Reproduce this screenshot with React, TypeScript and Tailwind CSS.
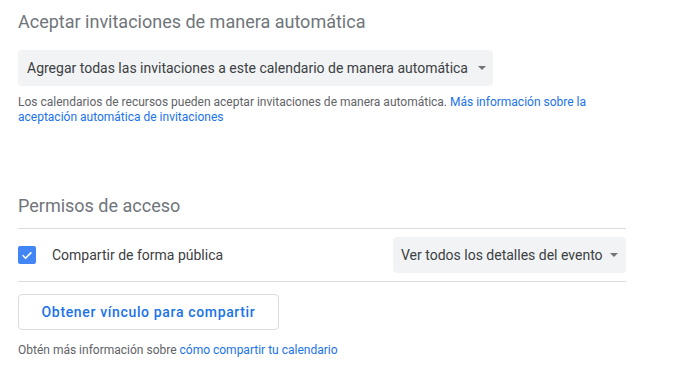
import React from "react";

function Caret() {
  return (
    <svg width="8" height="4" viewBox="0 0 10 5" className="shrink-0">
      <path d="M0 0l5 5 5-5z" fill="#70757a" />
    </svg>
  );
}

export default function App() {
  return (
    <div
      className="w-[687px] h-[383px] bg-white overflow-hidden"
      style={{ fontFamily: "Roboto, 'Liberation Sans', sans-serif" }}
    >
      <div className="pl-[18px] pt-[10px]">
        <h2 className="text-[18px] leading-[24px] text-[#70757a] font-normal">
          Aceptar invitaciones de manera automática
        </h2>
        <div className="mt-[16px] inline-flex items-center h-[36px] bg-[#f1f3f4] rounded-[4px] pl-[9px] pr-[7px] gap-[10px]">
          <span className="text-[14px] text-[#3c4043]">
            Agregar todas las invitaciones a este calendario de manera automática
          </span>
          <Caret />
        </div>
        <p className="mt-[9px] text-[12px] leading-[15px] text-[#5f6368] w-[580px]">
          Los calendarios de recursos pueden aceptar invitaciones de manera automática.{" "}
          <span className="text-[#1a73e8]">
            Más información sobre la aceptación automática de invitaciones
          </span>
        </p>

        <h2 className="mt-[69px] text-[18px] leading-[24px] text-[#70757a] font-normal">
          Permisos de acceso
        </h2>
        <div className="w-[608px] mt-[10px] border-t border-b border-[#dadce0] flex items-center justify-between h-[54px]">
          <div className="flex items-center">
            <div className="w-[18px] h-[18px] rounded-[2px] bg-[#4285f4] flex items-center justify-center">
              <svg width="14" height="14" viewBox="0 0 24 24">
                <path
                  d="M4.5 12.5l5 5 10-10"
                  fill="none"
                  stroke="white"
                  strokeWidth="2.8"
                />
              </svg>
            </div>
            <span className="ml-[16px] text-[14px] text-[#3c4043]">
              Compartir de forma pública
            </span>
          </div>
          <div className="flex items-center h-[36px] w-[233px] bg-[#f1f3f4] rounded-[4px] pl-[8px] pr-[8px] justify-between">
            <span className="text-[14px] text-[#3c4043]">
              Ver todos los detalles del evento
            </span>
            <Caret />
          </div>
        </div>
        <button className="mt-[12px] w-[261px] h-[36px] border border-[#dadce0] rounded-[4px] bg-white text-[14px] font-medium text-[#1a73e8] tracking-[0.65px]">
          Obtener vínculo para compartir
        </button>
        <p className="mt-[12px] text-[12px] leading-[16px] text-[#5f6368]">
          Obtén más información sobre{" "}
          <span className="text-[#1a73e8]">cómo compartir tu calendario</span>
        </p>
      </div>
    </div>
  );
}
